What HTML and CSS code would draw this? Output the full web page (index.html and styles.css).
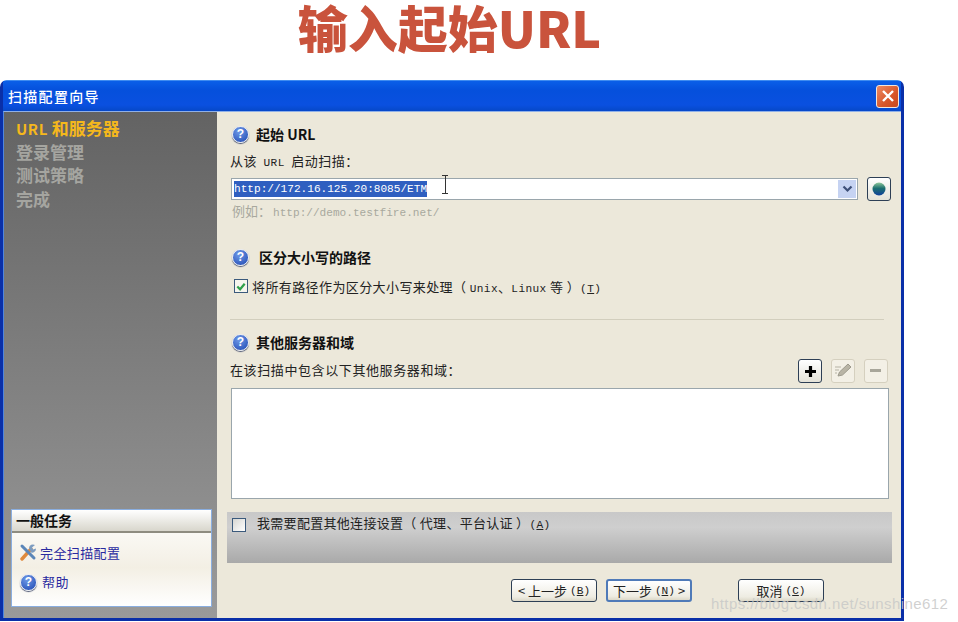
FILE: index.html
```html
<!DOCTYPE html>
<html lang="zh-CN">

<head>
  <meta charset="UTF-8">
  <title>输入起始URL</title>
  <link rel="stylesheet" href="styles.css">
</head>

<body>
  <h1 class="slide-title">输入起始URL</h1>

  <div class="window">
    <div class="titlebar">
      <span class="titlebar-text">扫描配置向导</span>
      <span class="close-btn">
        <svg width="14" height="14" viewBox="0 0 14 14"><path d="M2 2 L12 12 M12 2 L2 12" stroke="#fff" stroke-width="2.4" /></svg>
      </span>
    </div>

    <div class="window-body">
      <!-- Left side steps -->
      <div class="sidebar">
        <ul class="steps">
          <li class="step-active"><span class="step-latin">URL</span> 和服务器</li>
          <li>登录管理</li>
          <li>测试策略</li>
          <li>完成</li>
        </ul>

        <div class="tasks">
          <div class="tasks-head">一般任务</div>
          <div class="tasks-body">
            <div class="task-row">
              <svg class="task-icon" width="18" height="18" viewBox="0 0 18 18">
                <path d="M3 16 L12 6" stroke="#e08a3c" stroke-width="3.4" stroke-linecap="round" />
                <path d="M3 3 L15 15" stroke="#5b86b8" stroke-width="3" stroke-linecap="round" />
                <path d="M10 5 a4 4 0 0 1 6 -3 l-3 2.5 l1 2 l3 -1 a4 4 0 0 1 -5 4 z" fill="#7d9cc0" />
              </svg>
              <span>完全扫描配置</span>
            </div>
            <div class="task-row">
              <span class="help-icon help-small">?</span>
              <span>帮助</span>
            </div>
          </div>
        </div>
      </div>

      <!-- Main form -->
      <div class="content">
        <div class="section-head">
          <span class="help-icon">?</span>
          <span class="section-title">起始 URL</span>
        </div>
        <div class="field-label">从该 <span class="mono">URL</span> 启动扫描：</div>
        <div class="url-row">
          <div class="combo">
            <span class="combo-text"><span class="selected">http://172.16.125.20:8085/ETM</span></span>
            <span class="i-beam"></span>
            <span class="combo-arrow">
              <svg width="11" height="8" viewBox="0 0 11 8"><path d="M1.5 1.5 L5.5 5.5 L9.5 1.5" fill="none" stroke="#3d4f78" stroke-width="2.2" /></svg>
            </span>
          </div>
          <span class="tool-btn tool-active">
            <svg width="16" height="16" viewBox="0 0 16 16">
              <defs>
                <linearGradient id="globe" x1="0" y1="0" x2="0" y2="1">
                  <stop offset="0" stop-color="#8fc89a" />
                  <stop offset="0.45" stop-color="#1c6f70" />
                  <stop offset="1" stop-color="#0e3f9c" />
                </linearGradient>
              </defs>
              <circle cx="8" cy="8" r="6.5" fill="url(#globe)" />
            </svg>
          </span>
        </div>
        <div class="hint">例如：<span class="mono hint-url">http://demo.testfire.net/</span></div>

        <div class="section-head section-case">
          <span class="help-icon">?</span>
          <span class="section-title section-title-wide">区分大小写的路径</span>
        </div>
        <label class="check-row">
          <span class="checkbox">
            <svg width="13" height="13" viewBox="0 0 13 13"><path d="M2.5 6.5 L5.5 9.5 L10.5 3.5" fill="none" stroke="#2fa04a" stroke-width="2.4" /></svg>
          </span>
          <span class="check-text">将所有路径作为区分大小写来处理（ <span class="mono">Unix</span>、<span class="mono">Linux</span> 等 ）<span class="mono">(<u>T</u>)</span></span>
        </label>

        <div class="divider"></div>

        <div class="section-head section-other">
          <span class="help-icon">?</span>
          <span class="section-title">其他服务器和域</span>
        </div>
        <div class="servers-bar">
          <span class="servers-text">在该扫描中包含以下其他服务器和域：</span>
          <div class="tools">
            <span class="tool-btn tool-active">
              <svg width="13" height="13" viewBox="0 0 13 13"><path d="M6.5 1 V12 M1 6.5 H12" stroke="#000" stroke-width="3.2" /></svg>
            </span>
            <span class="tool-btn tool-off">
              <svg width="20" height="20" viewBox="0 0 20 20">
                <path d="M5 15 L6.5 11 L15 3 L18 6 L9.5 14 Z" fill="#b9b5a6" stroke="#9d9a8d" />
                <path d="M2 6 H8 M2 9 H6 M2 12 H4" stroke="#b5b2a4" stroke-width="1.2" />
              </svg>
            </span>
            <span class="tool-btn tool-off">
              <svg width="12" height="4" viewBox="0 0 12 4"><rect width="11" height="3" fill="#a8a69a" /></svg>
            </span>
          </div>
        </div>
        <div class="servers-list"></div>

        <div class="conn-panel">
          <span class="checkbox checkbox-plain"></span>
          <span class="conn-text">我需要配置其他连接设置（ 代理、平台认证 ）<span class="mono">(<u>A</u>)</span></span>
        </div>

        <div class="buttons">
          <span class="btn">&lt; 上一步 <span class="mono">(<u>B</u>)</span></span>
          <span class="btn btn-default">下一步 <span class="mono">(<u>N</u>)</span>&gt;</span>
          <span class="btn btn-cancel">取消 <span class="mono">(<u>C</u>)</span></span>
        </div>
      </div>
    </div>
  </div>

  <div class="watermark">https://blog.csdn.net/sunshine612</div>
</body>

</html>
```

FILE: styles.css
```css
html,
body {
  height: 622px;
  overflow: hidden;
}

body {
  margin: 0;
  background-color: #fff;
  font-family: "Noto Sans CJK SC", "Liberation Sans", sans-serif;
  font-size: 13px;
  color: #222;
}

.slide-title {
  margin: 0;
  height: 80px;
  width: 899px;
  text-align: center;
  font-size: 50px;
  line-height: 52px;
  font-weight: 900;
  color: #c9533c;
}

.window {
  width: 904px;
  height: 541px;
  box-sizing: border-box;
  display: flex;
  flex-direction: column;
  background-color: #0a3fd0;
  border-radius: 7px 7px 0 0;
  border: 1px solid #0a2fa8;
  border-width: 0 3px 3px 3px;
  border-top: 1px solid #3f8cf0;
}

.titlebar {
  height: 30px;
  flex: none;
  display: flex;
  align-items: center;
  justify-content: space-between;
  padding: 0 2px 0 5px;
  background: linear-gradient(#0a5fe8, #0550dc 30%, #0a50e0 80%, #0648c8);
}

.titlebar-text {
  color: #fff;
  font-size: 14px;
  font-weight: 500;
  letter-spacing: 1.3px;
}

.close-btn {
  width: 23px;
  height: 23px;
  box-sizing: border-box;
  display: flex;
  align-items: center;
  justify-content: center;
  background: linear-gradient(135deg, #ec8a62, #d8562a 60%, #c8481e);
  border: 1px solid #f2e6dc;
  border-radius: 3px;
}

.window-body {
  flex: 1;
  display: flex;
  min-height: 0;
  border-top: 1px solid #8fb0e8;
  border-left: 1px solid #4f86e0;
}

/* left side */
.sidebar {
  width: 213px;
  flex: none;
  box-sizing: border-box;
  display: flex;
  flex-direction: column;
  justify-content: space-between;
  padding: 4px 5px 11px 7px;
  background: linear-gradient(#636363, #9a9a9a);
}

.steps {
  list-style: none;
  margin: 0;
  padding: 0 0 0 5px;
  font-size: 17px;
  line-height: 23.2px;
  font-weight: 700;
  color: #a5a5a0;
}

.step-active {
  color: #f5b81c;
}

.step-latin {
  font-size: 15px;
  letter-spacing: 0.6px;
}

.tasks {
  border: 1px solid #8aaee0;
  background: linear-gradient(#fff, #f3efe4 60%, #fff);
}

.tasks-head {
  height: 23px;
  line-height: 20px;
  box-sizing: border-box;
  padding-left: 4px;
  font-size: 14px;
  font-weight: 700;
  color: #111;
  background: linear-gradient(#fff, #d8d6cc);
  border-bottom: 2px solid #8e8c80;
}

.tasks-body {
  height: 73px;
  box-sizing: border-box;
  padding: 10px 0 0 7px;
  color: #2a2aa0;
  letter-spacing: 0.4px;
}

.task-row {
  height: 29px;
  display: flex;
  align-items: flex-start;
  gap: 3px;
  line-height: 20px;
}

.help-icon {
  width: 15px;
  height: 15px;
  flex: none;
  display: inline-flex;
  align-items: center;
  justify-content: center;
  border-radius: 50%;
  background: radial-gradient(circle at 40% 30%, #6f9ae8, #1d46b0);
  border: 1px solid #e8ecf4;
  box-shadow: 0 1px 1px 0 #4a5470;
  color: #fff;
  font-family: "Liberation Sans", sans-serif;
  font-size: 12px;
  font-weight: 700;
  line-height: 15px;
}

.help-small {
  margin: 2px 2px 0 1px;
}

/* main form */
.content {
  flex: 1;
  min-width: 0;
  box-sizing: border-box;
  padding: 12px 10px 0 10px;
  background-color: #ece8da;
}

.mono {
  font-family: "Liberation Mono", monospace;
  font-size: 11.1px;
}

.section-head {
  height: 20px;
  display: flex;
  align-items: center;
  gap: 7px;
  padding-left: 5px;
}

.section-title {
  font-size: 14px;
  font-weight: 700;
  color: #111;
}

.section-title-wide {
  margin-left: 3px;
}

.field-label {
  height: 20px;
  margin-top: 7px;
  padding-left: 3px;
  line-height: 20px;
  letter-spacing: 0.5px;
}

.field-label .mono {
  margin: 0 3px;
}

.url-row {
  display: flex;
  align-items: center;
  gap: 9px;
  height: 24px;
  margin-top: 6px;
  padding-left: 4px;
}

.combo {
  position: relative;
  flex: 1;
  height: 22px;
  box-sizing: border-box;
  display: flex;
  align-items: center;
  justify-content: space-between;
  padding: 0 1px 0 2px;
  background-color: #fff;
  border: 1px solid #9aa6ac;
}

.combo-text {
  font-family: "Liberation Mono", monospace;
  font-size: 11.1px;
  line-height: 16px;
}

.selected {
  display: inline-block;
  background-color: #2f5fc0;
  color: #fff;
}

.i-beam {
  position: absolute;
  left: 210px;
  top: -4px;
  width: 6px;
  height: 19px;
  box-sizing: border-box;
  border-top: 1px solid #333;
  border-bottom: 1px solid #333;
  background: linear-gradient(#333, #333) center / 1px 100% no-repeat;
}

.combo-arrow {
  width: 18px;
  height: 18px;
  display: flex;
  align-items: center;
  justify-content: center;
  background-color: #c6d3f2;
}

.tool-btn {
  width: 24px;
  height: 24px;
  flex: none;
  box-sizing: border-box;
  display: flex;
  align-items: center;
  justify-content: center;
  border-radius: 3px;
}

.tool-active {
  border: 1px solid #2d3f55;
  background: linear-gradient(#fff, #e4e2d8);
}

.tool-off {
  border: 1px solid #d5d0bf;
  background-color: #f3f0e6;
}

.hint {
  height: 20px;
  margin-top: 0;
  padding-left: 5px;
  line-height: 20px;
  color: #a8a89e;
}

.hint-url {
  margin-left: 2px;
}

.section-case {
  margin-top: 26px;
}

.check-row {
  height: 20px;
  display: flex;
  align-items: center;
  gap: 4px;
  margin-top: 9px;
  padding-left: 7px;
}

.checkbox {
  width: 14px;
  height: 14px;
  flex: none;
  box-sizing: border-box;
  display: flex;
  align-items: center;
  justify-content: center;
  background-color: #f6f5ee;
  border: 1px solid #3b5a7c;
}

.checkbox-plain {
  background: linear-gradient(135deg, #d6d6d2, #fff);
}

.check-text {
  letter-spacing: 0.4px;
}

.divider {
  height: 1px;
  margin: 23px 7px 0 3px;
  background-color: #d2cebd;
}

.section-other {
  margin-top: 12px;
}

.servers-bar {
  height: 24px;
  display: flex;
  align-items: center;
  justify-content: space-between;
  margin-top: 5px;
  padding: 0 3px 0 3px;
}

.servers-text {
  letter-spacing: 0.6px;
}

.tools {
  display: flex;
  gap: 9px;
  margin-top: 4px;
}

.servers-list {
  height: 111px;
  box-sizing: border-box;
  margin: 7px 2px 0 4px;
  background-color: #fff;
  border: 1px solid #9aa6ac;
}

.conn-panel {
  height: 51px;
  box-sizing: border-box;
  display: flex;
  align-items: flex-start;
  gap: 11px;
  margin: 13px -1px 0 0;
  padding: 3px 0 0 5px;
  background: linear-gradient(#c8c8c8, #cfcfcf 30%, #a9a9a9);
  letter-spacing: 0.3px;
}

.conn-panel .checkbox {
  margin-top: 3px;
}

.conn-text {
  line-height: 16px;
}

.buttons {
  display: flex;
  margin-top: 16px;
  padding-left: 284px;
  gap: 9px;
}

.btn {
  width: 86px;
  height: 23px;
  box-sizing: border-box;
  display: flex;
  align-items: center;
  justify-content: center;
  gap: 3px;
  line-height: 18px;
  background: linear-gradient(#fff, #eeece2 80%, #dcd8c8);
  border: 1px solid #2d3f55;
  border-radius: 3px;
}

.btn-default {
  border: 2px solid #4f7ab8;
}

.btn-cancel {
  margin-left: 37px;
}

.watermark {
  position: absolute;
  left: 711px;
  top: 595px;
  font-family: "Liberation Sans", sans-serif;
  font-size: 15px;
  letter-spacing: 0.42px;
  color: rgba(200, 200, 200, 0.85);
}
```
